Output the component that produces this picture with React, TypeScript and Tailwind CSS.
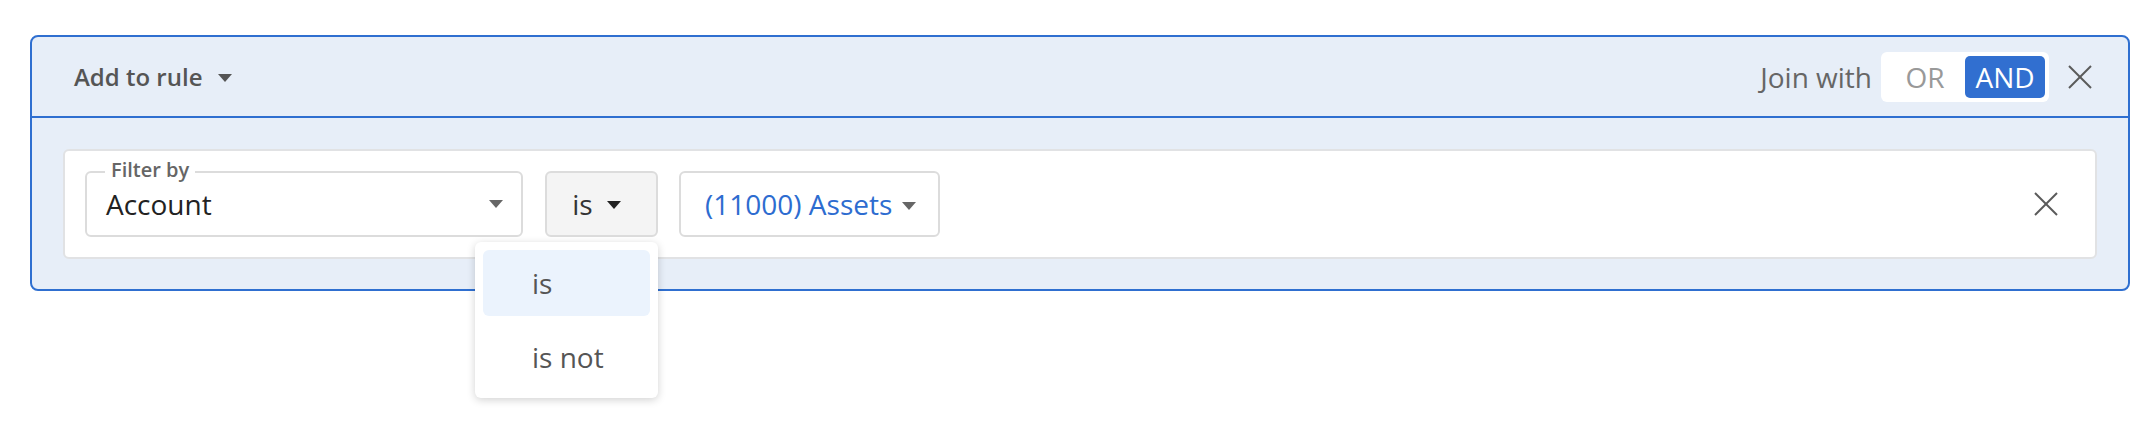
import React from "react";

function Caret({ className }: { className: string }) {
  return (
    <svg width="14" height="8" viewBox="0 0 14 8" className={className}>
      <polygon points="0,0 14,0 7,8" fill="currentColor" />
    </svg>
  );
}

function CloseIcon() {
  return (
    <svg width="24" height="24" viewBox="0 0 24 24" className="text-[#5a5a5a]">
      <line x1="1" y1="1" x2="23" y2="23" stroke="currentColor" strokeWidth="2" />
      <line x1="23" y1="1" x2="1" y2="23" stroke="currentColor" strokeWidth="2" />
    </svg>
  );
}

export default function App() {
  return (
    <div
      className="w-[2156px] h-[430px] bg-white pl-[30px] pt-[35px]"
      style={{ fontFamily: '"Open Sans", "Noto Sans", sans-serif' }}
    >
      <div className="w-[2100px] rounded-[8px] border-2 border-[#2f6fd0] bg-[#e7eef8]">
        {/* header */}
        <div className="flex h-[81px] items-center border-b-2 border-[#2f6fd0] pl-[42px] pr-[36px]">
          <div className="flex items-center gap-[16px]">
            <span className="text-[24px] font-semibold text-[#555]">Add to rule</span>
            <Caret className="mt-[2px] text-[#555]" />
          </div>
          <div className="ml-auto flex items-center">
            <span className="text-[28px] text-[#666]">Join with</span>
            <div className="ml-[9px] flex h-[50px] w-[168px] items-center rounded-[6px] bg-white p-[4px]">
              <div className="flex h-[42px] w-[80px] items-center justify-center text-[28px] text-[#999]">OR</div>
              <div className="flex h-[42px] w-[80px] items-center justify-center rounded-[5px] bg-[#316fd0] text-[28px] text-white">
                AND
              </div>
            </div>
            <div className="ml-[19px]">
              <CloseIcon />
            </div>
          </div>
        </div>

        {/* body */}
        <div className="px-[31px] pt-[31px] pb-[30px]">
          <div className="flex items-center rounded-[6px] border-2 border-[#e1e2e4] bg-white p-[20px]">
            {/* filter by */}
            <div className="relative flex h-[66px] w-[438px] items-center rounded-[6px] border-2 border-[#dcdcdc] pl-[19px] pr-[18px]">
              <span className="absolute left-[18px] top-[-13px] bg-white px-[6px] text-[20px] font-semibold leading-[20px] text-[#666]">
                Filter by
              </span>
              <span className="text-[28px] text-[#222]">Account</span>
              <Caret className="ml-auto text-[#666]" />
            </div>

            {/* operator */}
            <div className="relative ml-[22px]">
              <div className="flex h-[66px] w-[113px] items-center justify-center gap-[14px] rounded-[6px] border-2 border-[#dcdcdc] bg-[#f4f4f4] pr-[10px]">
                <span className="text-[28px] text-[#333]">is</span>
                <Caret className="mt-[2px] text-[#222]" />
              </div>
              <div className="absolute right-0 top-[71px] z-10 flex w-[183px] flex-col gap-[8px] rounded-[6px] bg-white p-[8px] shadow-[0_2px_8px_rgba(0,0,0,0.18)]">
                <div className="flex h-[66px] items-center rounded-[6px] bg-[#ebf3fd] pl-[49px] text-[28px] text-[#555]">is</div>
                <div className="flex h-[66px] items-center pl-[49px] text-[28px] text-[#555]">is not</div>
              </div>
            </div>

            {/* value */}
            <div className="ml-[21px] flex h-[66px] w-[261px] items-center gap-[10px] rounded-[6px] border-2 border-[#dcdcdc] pl-[24px]">
              <span className="text-[28px] text-[#2d6cd0]">(11000) Assets</span>
              <Caret className="mt-[3px] text-[#666]" />
            </div>

            <div className="ml-auto mr-[17px]">
              <CloseIcon />
            </div>
          </div>
        </div>
      </div>
    </div>
  );
}
